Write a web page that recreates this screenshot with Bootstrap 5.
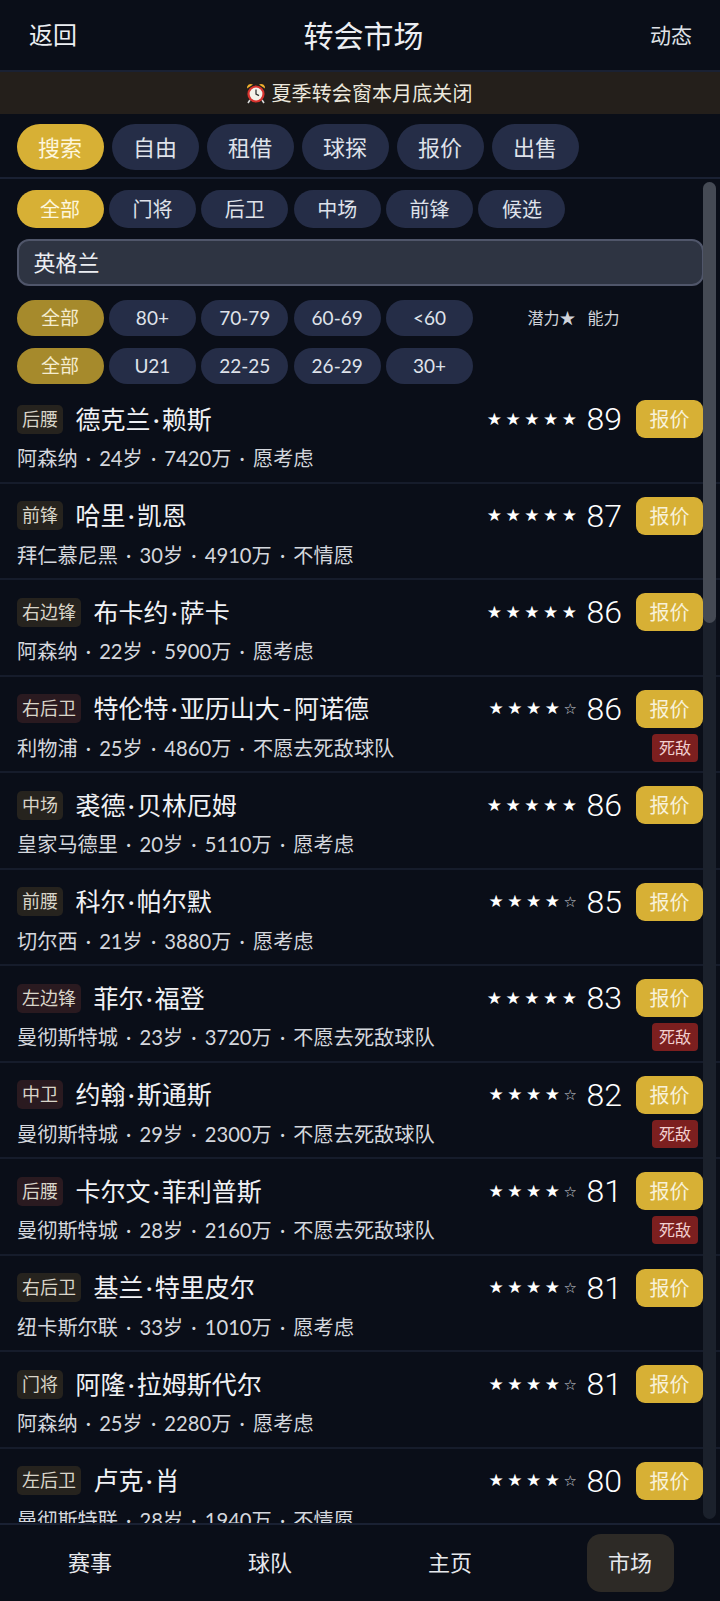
<!DOCTYPE html>
<html lang="zh"><head><meta charset="utf-8"><title>转会市场</title>
<link href="https://cdn.jsdelivr.net/npm/bootstrap@5.3.0/dist/css/bootstrap.min.css" rel="stylesheet">
<style>
html,body{height:100%}
body{background:#0a0e18;color:#eceef2;font-family:"Lato","Noto Sans CJK SC",sans-serif;overflow:hidden}
.shell{height:1601px;width:720px}
.topbar{height:70px;padding:0 28px 0 29px}
.topbar .back{font-size:24px}
.topbar .ttl{font-size:30px;font-weight:400}
.topbar .act{font-size:21px;color:#dfe1e6}
.rule{border-bottom:2px solid #1a2133}
.notice{height:42px;background:#241f1b;font-size:20px;letter-spacing:.1px;color:#ebe7dc;gap:5px;padding-right:3px}
.tabrow{height:65px;padding:10px 17px 0 16.5px;gap:8px;border-bottom:2px solid #1a2133}
.tabpill{width:87px;height:46px;border-radius:23px;background:#252d47;color:#dfe2ea;font-size:22px}
.tabpill.on,.chip.on{background:#d7b035;color:#fdf6dd}
.scrollzone{min-height:0;overflow:hidden}
.filters{padding:11px 17px 3.4px 16.5px}
.chiprow{gap:5.4px}
.chip{width:87px;height:38px;border-radius:19px;background:#252d47;color:#dfe2ea;font-size:20px}
.chip.sm{height:36px;border-radius:18px;font-size:19px}
.chip.on.dim{background:#a68a2c;color:#f4ecd0}
.searchbox{height:47px;margin:11px 0 14px;background:#2e3442;border:2px solid #50566a;border-radius:12px;color:#eceef2;font-size:22px;padding:0 15px;width:687px}
.legend{font-size:16px;color:#d0d3da;margin-left:49px;width:106px;gap:12px}
.plr{height:96.5px;padding:13px 17px 0;border-bottom:2px solid #161c2b}
.tagbit{height:29px;padding:0 5px;border-radius:5px;background:#26231e;color:#d9d5c9;font-size:18px;margin-right:12.5px;white-space:nowrap}
.tagbit.foe{background:#2a1a20}
.pname{font-size:25px;color:#f0f1f4;white-space:nowrap}
.pname b{font-weight:400;margin:0 2.4px}
.stars{font-family:"DejaVu Sans",sans-serif;font-size:17px;letter-spacing:3.5px;color:#fff;margin-right:6px;white-space:nowrap}
.stars i{font-style:normal;font-size:15px;color:#cfd2d8}
.ovr{font-family:"Roboto","Lato",sans-serif;font-size:32px;font-weight:300;color:#fff;margin-right:14px;line-height:1}
.bidbtn{width:67px;height:38px;border-radius:9px;background:#d7b035;color:#f8f1d8;font-size:20px;border:0;padding:0}
.subwrap{margin-top:5px}
.subline{font-size:20.2px;word-spacing:3px;color:#d4d7dd;white-space:nowrap;height:30px}
.foebadge{width:46px;height:28px;margin-right:5px;border-radius:4px;background:#7c1f1f;color:#f1cfcf;font-size:16px}
.topline{height:38px}
.botnav{height:78px;border-top:2px solid #1a2133;padding-bottom:1px}
.botnav .cell{width:180px;font-size:22px;color:#e6e8ec}
.botnav .cell span{width:87px;height:58px;border-radius:14px}
.botnav .cell.on span{background:#2d2a26}
.sbtrack{top:182px;left:703px;width:13px;height:1337px;background:#1b212c;border-radius:7px}
.sbthumb{top:0;left:0;width:13px;height:441px;background:#454a54;border-radius:7px}
</style></head><body>
<div class="shell d-flex flex-column position-relative">
 <div class="topbar d-flex justify-content-between align-items-center flex-shrink-0">
  <span class="back">返回</span><span class="ttl">转会市场</span><span class="act">动态</span>
 </div>
 <div class="rule flex-shrink-0"></div>
 <div class="notice d-flex align-items-center justify-content-center flex-shrink-0">
  <svg width="22" height="22" viewBox="0 0 22 22" aria-hidden="true"><path d="M2 6.5a4 4 0 0 1 6-4z" fill="#f3b22e"/><path d="M20 6.5a4 4 0 0 0-6-4z" fill="#f3b22e"/><path d="M5 18l-2 3M17 18l2 3" stroke="#d9d9d9" stroke-width="1.6"/><circle cx="11" cy="12" r="8.6" fill="#d8332e"/><circle cx="11" cy="12" r="6.4" fill="#f4f1ea"/><path d="M11 7.6V12l3 1.6" stroke="#333" stroke-width="1.3" fill="none"/></svg>
  <span>夏季转会窗本月底关闭</span>
 </div>
 <div class="tabrow d-flex flex-shrink-0">
  <div class="tabpill on d-flex align-items-center justify-content-center">搜索</div>
  <div class="tabpill d-flex align-items-center justify-content-center">自由</div>
  <div class="tabpill d-flex align-items-center justify-content-center">租借</div>
  <div class="tabpill d-flex align-items-center justify-content-center">球探</div>
  <div class="tabpill d-flex align-items-center justify-content-center">报价</div>
  <div class="tabpill d-flex align-items-center justify-content-center">出售</div>
 </div>
 <div class="scrollzone flex-grow-1">
  <div class="filters">
   <div class="chiprow d-flex">
    <div class="chip on d-flex align-items-center justify-content-center">全部</div>
    <div class="chip d-flex align-items-center justify-content-center">门将</div>
    <div class="chip d-flex align-items-center justify-content-center">后卫</div>
    <div class="chip d-flex align-items-center justify-content-center">中场</div>
    <div class="chip d-flex align-items-center justify-content-center">前锋</div>
    <div class="chip d-flex align-items-center justify-content-center">候选</div>
   </div>
   <div class="searchbox d-flex align-items-center">英格兰</div>
   <div class="chiprow d-flex align-items-center mb-2 pb-1">
    <div class="chip sm on dim d-flex align-items-center justify-content-center">全部</div>
    <div class="chip sm d-flex align-items-center justify-content-center">80+</div>
    <div class="chip sm d-flex align-items-center justify-content-center">70-79</div>
    <div class="chip sm d-flex align-items-center justify-content-center">60-69</div>
    <div class="chip sm d-flex align-items-center justify-content-center">&lt;60</div>
    <div class="legend d-flex"><span>潜力★</span><span>能力</span></div>
   </div>
   <div class="chiprow d-flex">
    <div class="chip sm on dim d-flex align-items-center justify-content-center">全部</div>
    <div class="chip sm d-flex align-items-center justify-content-center">U21</div>
    <div class="chip sm d-flex align-items-center justify-content-center">22-25</div>
    <div class="chip sm d-flex align-items-center justify-content-center">26-29</div>
    <div class="chip sm d-flex align-items-center justify-content-center">30+</div>
   </div>
  </div>
  <div id="rows"></div>
 </div>
 <div class="botnav d-flex flex-shrink-0">
  <div class="cell d-flex align-items-center justify-content-center"><span class="d-flex align-items-center justify-content-center">赛事</span></div>
  <div class="cell d-flex align-items-center justify-content-center"><span class="d-flex align-items-center justify-content-center">球队</span></div>
  <div class="cell d-flex align-items-center justify-content-center"><span class="d-flex align-items-center justify-content-center">主页</span></div>
  <div class="cell on d-flex align-items-center justify-content-center"><span class="d-flex align-items-center justify-content-center">市场</span></div>
 </div>
 <div class="sbtrack position-absolute"><div class="sbthumb position-absolute"></div></div>
</div>
<script>
const D=[["后腰","德克兰·赖斯",5,89,"阿森纳 · 24岁 · 7420万 · 愿考虑",0],
["前锋","哈里·凯恩",5,87,"拜仁慕尼黑 · 30岁 · 4910万 · 不情愿",0],
["右边锋","布卡约·萨卡",5,86,"阿森纳 · 22岁 · 5900万 · 愿考虑",0],
["右后卫","特伦特·亚历山大-阿诺德",4,86,"利物浦 · 25岁 · 4860万 · 不愿去死敌球队",1],
["中场","裘德·贝林厄姆",5,86,"皇家马德里 · 20岁 · 5110万 · 愿考虑",0],
["前腰","科尔·帕尔默",4,85,"切尔西 · 21岁 · 3880万 · 愿考虑",0],
["左边锋","菲尔·福登",5,83,"曼彻斯特城 · 23岁 · 3720万 · 不愿去死敌球队",1],
["中卫","约翰·斯通斯",4,82,"曼彻斯特城 · 29岁 · 2300万 · 不愿去死敌球队",1],
["后腰","卡尔文·菲利普斯",4,81,"曼彻斯特城 · 28岁 · 2160万 · 不愿去死敌球队",1],
["右后卫","基兰·特里皮尔",4,81,"纽卡斯尔联 · 33岁 · 1010万 · 愿考虑",0],
["门将","阿隆·拉姆斯代尔",4,81,"阿森纳 · 25岁 · 2280万 · 愿考虑",0],
["左后卫","卢克·肖",4,80,"曼彻斯特联 · 28岁 · 1940万 · 不情愿",0]];
const nm=s=>s.replace(/[·-]/g,c=>`<b>${c}</b>`);
document.getElementById('rows').innerHTML=D.map(r=>`<div class="plr">
<div class="topline d-flex align-items-center"><span class="tagbit d-flex align-items-center ${r[5]?'foe':''}">${r[0]}</span><span class="pname flex-grow-1">${nm(r[1])}</span><span class="stars">${'★'.repeat(r[2])}${r[2]<5?'<i>☆</i>':''}</span><span class="ovr">${r[3]}</span><button class="bidbtn btn d-flex align-items-center justify-content-center">报价</button></div>
<div class="subwrap d-flex justify-content-between align-items-center"><span class="subline d-flex align-items-center">${r[4]}</span>${r[5]?'<span class="foebadge d-flex align-items-center justify-content-center">死敌</span>':''}</div></div>`).join('');
</script>
<script src="https://cdn.jsdelivr.net/npm/bootstrap@5.3.0/dist/js/bootstrap.bundle.min.js"></script>
</body></html>
